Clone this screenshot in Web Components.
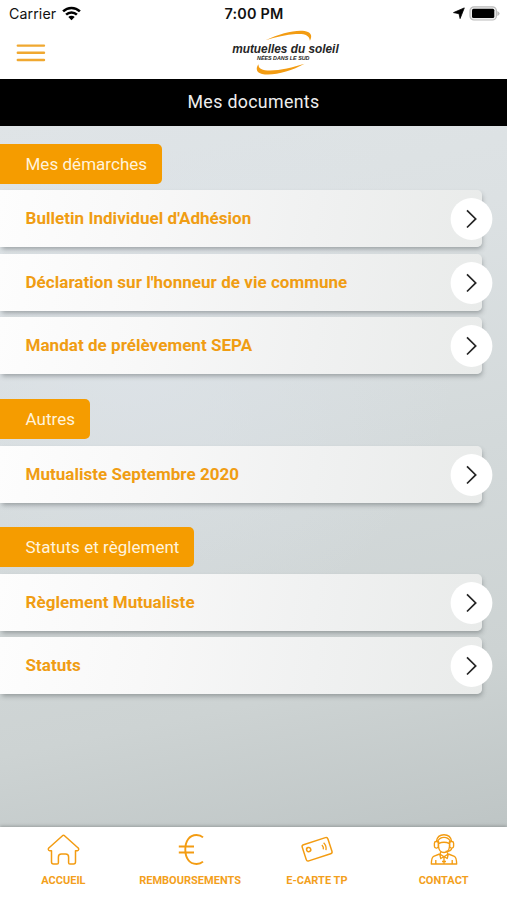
<!DOCTYPE html>
<html lang="fr">
<head>
<meta charset="utf-8">
<title>Mes documents</title>
<style>
html,body{margin:0;height:100%}
body{font-family:Roboto,"Liberation Sans",sans-serif;background:#fff;overflow:hidden}
</style>
</head>
<body>
<app-screen>
  <status-bar slot="top"></status-bar>
  <brand-header slot="top"></brand-header>
  <page-title slot="top">Mes documents</page-title>
  <doc-section label="Mes démarches">
    <doc-row>Bulletin Individuel d'Adhésion</doc-row>
    <doc-row>Déclaration sur l'honneur de vie commune</doc-row>
    <doc-row>Mandat de prélèvement SEPA</doc-row>
  </doc-section>
  <doc-section label="Autres">
    <doc-row>Mutualiste Septembre 2020</doc-row>
  </doc-section>
  <doc-section label="Statuts et règlement">
    <doc-row>Règlement Mutualiste</doc-row>
    <doc-row>Statuts</doc-row>
  </doc-section>
  <tab-bar slot="bottom">
    <tab-item icon="home">ACCUEIL</tab-item>
    <tab-item icon="euro">REMBOURSEMENTS</tab-item>
    <tab-item icon="card">E-CARTE TP</tab-item>
    <tab-item icon="agent">CONTACT</tab-item>
  </tab-bar>
</app-screen>
<script>
const define = (name, render) => customElements.define(name, class extends HTMLElement {
  constructor() {
    super();
    this.attachShadow({mode: 'open'}).innerHTML = render(this);
  }
});

define('app-screen', () => `
<style>
:host{display:flex;flex-direction:column;height:900px;width:507px}
main{flex:1;min-height:0;box-sizing:border-box;padding-top:18.2px;display:flex;flex-direction:column;gap:24.6px;
background:radial-gradient(ellipse 330px 300px at 130px 220px,rgba(222,228,234,.7),rgba(222,228,234,0)),linear-gradient(168deg,#dfe4e6 0%,#dce1e3 22%,#d3d9da 52%,#cdd3d3 78%,#bec5c5 100%)}
</style>
<slot name="top"></slot><main><slot></slot></main><slot name="bottom"></slot>`);

define('status-bar', () => `
<style>
:host{display:grid;grid-template-columns:1fr auto 1fr;align-items:center;height:27px;padding:0 7px 0 9px;color:#111}
.l{display:flex;align-items:center;gap:6px;font:400 14.2px/27px Inter,sans-serif;letter-spacing:.1px}
.t{font:600 14.4px/27px Inter,sans-serif;letter-spacing:.2px;margin-left:-1px}
.r{display:flex;justify-content:flex-end;align-items:center;gap:4px}
svg{display:block}
</style>
<div class="l"><span>Carrier</span><svg width="19" height="15" viewBox="0 0 19 15"><g fill="none" stroke="#000" stroke-width="2.5"><path d="M1.1 5.4a12 12 0 0 1 16.8 0"/><path d="M4.1 8.6a7.7 7.7 0 0 1 10.8 0"/></g><path d="M9.5 14.2 6.3 11a4.5 4.5 0 0 1 6.4 0z"/></svg></div>
<div class="t">7:00 PM</div>
<div class="r"><svg width="12" height="13" viewBox="0 0 12 13"><path d="M11.3.9 7.1 11.6 6 6.700.5 5.600z" stroke="#000" stroke-width=".8" stroke-linejoin="round"/></svg>
<svg width="31" height="15" viewBox="0 0 31 15"><rect x="1" y=".8" width="26.4" height="13.2" rx="4" fill="#eee" stroke="#bbb" stroke-width="1.2"/><rect x="3" y="2.8" width="22.3" height="9.2" rx="1.5"/><path d="M28.3 5v5q2.3-1 2.3-2.5T28.3 5z" fill="#bbb"/></svg></div>`);

define('brand-header', () => `
<style>
:host{display:flex;align-items:flex-start;height:52px}
svg{display:block;overflow:visible}
</style>
<svg width="220" height="52" viewBox="0 27 220 52" stroke="#f0a830" stroke-width="2.4" stroke-linecap="round"><path d="M17.800 45.600H44M17.800 52.800H44M17.800 60H44"/></svg>
<svg width="130" height="52" viewBox="220 27 130 52">
<path d="M265.500 40.300C282 32.500 300 28.500 308 32c4 1.800 3.800 5.300 1.900 8.700-.6-5.600-5.600-7.200-14-6.600-9.500.6-20.500 3.200-30.400 6.200z" fill="#f39c12"/>
<path d="M304.500 63.800c-14 7.800-32 12.600-42.500 10.200-5.600-1.300-6.600-5.500-3.500-9.700-.3 4.600 4 6.200 11.500 6.200 10.500 0 23-3.200 34.500-6.700z" fill="#f39c12"/>
<text x="232.200" y="52.800" font-family="Liberation Sans,sans-serif" font-size="12.400" font-weight="700" font-style="italic" fill="#262626" textLength="106.500" lengthAdjust="spacingAndGlyphs">mutuelles du soleil</text>
<text x="257" y="60.100" font-family="Liberation Sans,sans-serif" font-size="5.200" font-weight="700" font-style="italic" fill="#262626" textLength="52.500" lengthAdjust="spacingAndGlyphs">NÉES DANS LE SUD</text>
</svg>`);

define('page-title', () => `
<style>
:host{display:block;height:46.500px;line-height:46.500px;background:#000;color:#eee;text-align:center;font-size:17.800px;letter-spacing:.33px}
</style><slot></slot>`);

define('doc-section', el => `
<style>
:host{display:flex;flex-direction:column;align-items:flex-start;gap:6.400px}
h2{margin:0;box-sizing:border-box;height:40.200px;line-height:40px;padding:0 15px 0 25.500px;border-radius:0 5px 5px 0;background:#f59c00;color:#fff3dc;font-weight:400;font-size:17px;letter-spacing:.03px}
</style><h2>${el.getAttribute('label')}</h2><slot></slot>`);

define('doc-row', () => `
<style>
:host{display:flex;align-items:center;justify-content:space-between;box-sizing:border-box;width:482.300px;height:57.100px;padding-left:25.500px;border-radius:0 5px 5px 0;background:linear-gradient(100deg,#fdfdfd 0%,#f8f8f8 30%,#f0f1f1 65%,#e9ebea 100%);box-shadow:1px 3px 5px -1px rgba(70,78,80,.45);color:#f09d13;font-weight:700;font-size:17px;letter-spacing:.04px}
span{margin-top:-.8px}
.go{display:block;width:43px;height:43px;margin-right:-10.700px}
</style><span><slot></slot></span>
<svg class="go" viewBox="0 0 43 43"><circle cx="21.500" cy="22" r="20.900" fill="#fff"/><path d="M17 13.300 25.700 21.900 17 30.500" fill="none" stroke="#252525" stroke-width="1.700"/></svg>`);

define('tab-bar', () => `
<style>
:host{display:grid;grid-template-columns:repeat(4,1fr);height:73.500px;background:#fff;box-shadow:0 -1px 3px rgba(80,85,85,.4);position:relative}
</style><slot></slot>`);

const icons = {
  home: '<path d="M5.500 18.800H3.700C2 18.500 1.900 16.700 3.100 15.700L16.500 3.700q1-.8 2 0L31.900 15.700c1.200 1 1.100 2.800-.6 3.100H29.500V30q0 2-2 2h-3.600q-1.300 0-1.300-1.300V25q0-3-3-3h-4.200q-3 0-3 3v5.700q0 1.300-1.300 1.300H7.500q-2 0-2-2z"/>',
  euro: '<path d="M30 5.400C28 3.500 26 3 23.500 3c-7.500 0-11.200 6.500-11.200 14.500S16 32 23.500 32c2.500 0 4.500-.5 6.500-2.400M5.800 14.500h15.200M5.800 20.500h15.200" stroke-width="1.900"/>',
  card: '<g transform="rotate(-18 17 17.300)"><rect x="3.600" y="8.800" width="27" height="17" rx="2"/><circle cx="9" cy="15" r="2.100"/><path d="M23 14.700q1.200 2.300 0 4.600M25.300 13.200q2 3.800 0 7.600" stroke-width="1.300"/></g>',
  agent: '<g stroke-width="1.350"><path d="M9.300 9.500C10 5.300 13 2.700 17 2.700s7 2.600 7.700 6.800M10.700 9.200C12 6.500 14 5.300 17 5.300s5 1.200 6.300 3.900M11.500 11.600q5.500-2.800 11 0M11.500 9v5.300c.3 4 2.500 6.200 5.500 6.200s5.200-2.200 5.500-6.200V9"/><rect x="7.400" y="9.500" width="4" height="6.600" rx="1.800"/><rect x="22.600" y="9.500" width="4" height="6.600" rx="1.800"/><path d="M24.800 16.200c-.4 2.500-2.500 3.300-6.300 3.300M13.700 19.500l-.5 2.800 3.800 2.500 3.800-2.500-.5-2.800M12.600 21.800l1.200 4.700 3.200-2 3.200 2 1.200-4.700M12.600 22l-6 2.300C4.900 25 4.500 27 4.300 32h25.400c-.2-5-.6-7-2.300-7.700l-6-2.300M8.800 28v4M25.200 28v4M17 25v7M15 29.500h4"/></g>'
};

define('tab-item', el => `
<style>
:host{display:flex;flex-direction:column;align-items:center;padding-top:5px;color:#f3a01c;font-weight:700;font-size:11px;line-height:14px;letter-spacing:.02px;white-space:nowrap}
svg{display:block;width:34px;height:35px;margin-bottom:7.500px}
</style>
<svg viewBox="0 0 34 35" fill="none" stroke="#f39c12" stroke-width="1.500" stroke-linejoin="round">${icons[el.getAttribute('icon')]}</svg><span><slot></slot></span>`);
</script>
</body>
</html>
